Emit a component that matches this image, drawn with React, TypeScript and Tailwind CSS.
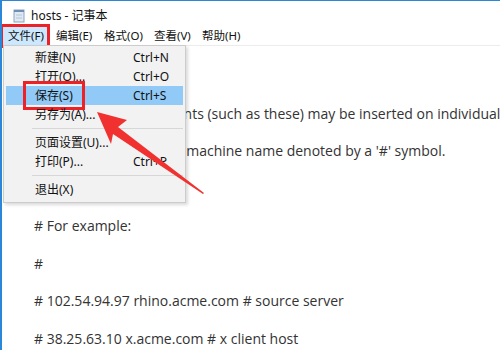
import React from "react";

const cjk = { fontFamily: '"Noto Sans", "Noto Sans CJK SC", sans-serif' };
const body = { fontFamily: '"Open Sans", "Noto Sans CJK SC", sans-serif' };

function MenuRow({ label, shortcut, active }: { label: string; shortcut?: string; active?: boolean }) {
  return (
    <div className={`relative mx-[2px] flex h-[19px] items-center ${active ? "bg-[#91c9f7]" : ""}`}>
      <span className="pl-[29px] w-[127px] text-[12px] text-[#111]">{label}</span>
      <span className="text-[12px] text-[#111]">{shortcut}</span>
      {active && (
        <div className="absolute left-[17px] top-[-5px] h-[29px] w-[62px] border-[3px] border-[#ec2227]" />
      )}
    </div>
  );
}

function Sep() {
  return (
    <div className="flex h-[9px] items-center pl-[28px] pr-[2px]">
      <div className="h-px w-full bg-[#d7d7d7]" />
    </div>
  );
}

export default function App() {
  return (
    <div className="relative h-[350px] w-[500px] overflow-hidden bg-white border-l-2 border-t border-[#2b88d8]" style={cjk}>
      {/* title bar */}
      <div className="flex h-[26px] items-center pl-[11px] pt-[3px]">
        <svg width="12" height="14" viewBox="0 0 12 14">
          <rect x="1" y="1" width="10" height="12" fill="#dfe9f3" stroke="#8aa3bd" strokeWidth="1" />
          <rect x="1" y="1" width="10" height="2" fill="#6f8fb0" />
          <line x1="3" y1="6" x2="9" y2="6" stroke="#b3c4d6" />
          <line x1="3" y1="9" x2="9" y2="9" stroke="#b3c4d6" />
        </svg>
        <span className="ml-[6px] text-[12px] text-[#111]">hosts - 记事本</span>
      </div>
      {/* menu bar */}
      <div className="flex h-[19px] items-center border-b border-[#ececec] text-[11.5px] text-[#111]">
        <div className="relative flex h-[19px] w-[48px] items-center bg-[#cce8ff] pl-[6px]">
          文件(F)
          <div className="absolute left-[-2px] top-[-3px] h-[24px] w-[50px] border-[3px] border-[#ec2227]" />
        </div>
        <span className="ml-[6px] w-[48px]">编辑(E)</span>
        <span className="w-[50px]">格式(O)</span>
        <span className="w-[48px]">查看(V)</span>
        <span>帮助(H)</span>
      </div>
      {/* text area */}
      <div className="pl-[32px] pt-[11px] text-[14px] leading-[37.5px] text-[#333] whitespace-pre" style={body}>
        <div>#</div>
        <div className="ml-[18px]"># Additional comments (such as these) may be inserted on individual</div>
        <div># lines or following the machine name denoted by a '#' symbol.</div>
        <div>#</div>
        <div># For example:</div>
        <div>#</div>
        <div># 102.54.94.97 rhino.acme.com # source server</div>
        <div># 38.25.63.10 x.acme.com # x client host</div>
      </div>
      {/* dropdown */}
      <div className="absolute left-[1px] top-[44px] w-[183px] border border-[#cccccc] bg-[#f2f2f2] pt-[2px] pb-[3px] shadow-[2px_2px_3px_rgba(0,0,0,0.15)]">
        <MenuRow label="新建(N)" shortcut="Ctrl+N" />
        <MenuRow label="打开(O)..." shortcut="Ctrl+O" />
        <MenuRow label="保存(S)" shortcut="Ctrl+S" active />
        <MenuRow label="另存为(A)..." />
        <Sep />
        <MenuRow label="页面设置(U)..." />
        <MenuRow label="打印(P)..." shortcut="Ctrl+P" />
        <Sep />
        <MenuRow label="退出(X)" />
      </div>
      {/* arrow */}
      <svg className="absolute left-0 top-0" width="500" height="350" viewBox="0 0 500 350">
        <polygon points="95,111 125,119 116,126 202,192 201,193 111,133 109,143" fill="#f0312f" />
      </svg>
    </div>
  );
}
